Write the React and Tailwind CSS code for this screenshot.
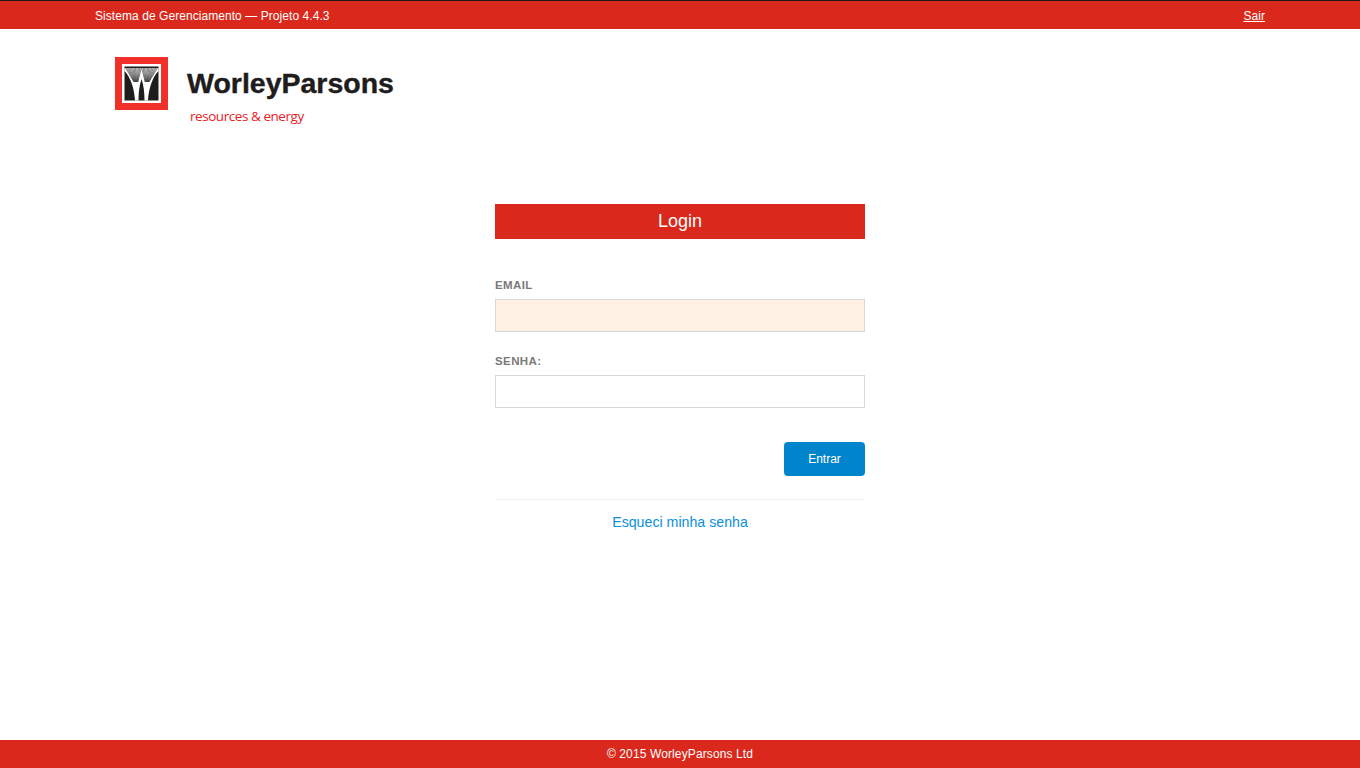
import React from 'react';

const sans = "font-['Liberation_Sans',Arial,sans-serif]";

// fan rays for the logo mark
const rays = [];
for (let i = 0; i <= 11; i++) {
  rays.push(i);
}

const LogoMark = () => (
  <svg width="53" height="53" viewBox="0 0 53 53" className="block shrink-0">
    <rect width="53" height="53" fill="#f1302a" />
    <rect x="7" y="7" width="39" height="39" fill="#ffffff" />
    <rect x="9.5" y="9.5" width="34" height="34" fill="#1f1c1c" />
    {/* two stems spreading into the fan */}
    <path d="M9.5 11 L43.5 11 L43.5 14 C37.5 20 33.5 32 33 43.5 L29.5 43.5 C29.5 35 28.5 28 26.5 22 C24.5 28 23.5 35 23.5 43.5 L20 43.5 C19.5 32 15.5 20 9.5 14 Z" fill="#ffffff" />
    {rays.map((i) => (
      <g key={i} stroke="#1f1c1c" strokeWidth="0.8" opacity="0.7">
        <line x1={10 + i * 1.5} y1="10" x2={19 + i * 0.35} y2="25" />
        <line x1={43 - i * 1.5} y1="10" x2={34 - i * 0.35} y2="25" />
      </g>
    ))}
  </svg>
);

const App = () => {
  return (
    <div className={`flex min-h-screen flex-col bg-white ${sans}`}>
      {/* top bar */}
      <div className="h-[29px] border-t border-t-[#1a1a1a] bg-[#da291c]">
        <div className="mx-auto flex h-[28px] w-[1170px] items-center justify-between pt-[1px] text-[12px] tracking-[0.06px] text-white">
          <span>Sistema de Gerenciamento — Projeto 4.4.3</span>
          <a href="#" className="underline">Sair</a>
        </div>
      </div>

      {/* logo */}
      <div className="mx-auto w-[1170px] pl-5 pt-7">
        <div className="flex h-[53px] items-center">
          <LogoMark />
          <span className="ml-[19px] text-[28.5px] font-bold leading-none text-[#1f1c1c] [-webkit-text-stroke:0.4px_#1f1c1c]">
            WorleyParsons
          </span>
        </div>
        <div className="ml-[75px] mt-[-4px] text-[13.5px] leading-[20px] tracking-[-0.45px] text-[#e8201f] font-['Open_Sans',sans-serif]">
          resources &amp; energy
        </div>
      </div>

      {/* login form */}
      <main className="mx-auto mt-[78px] w-[370px]">
        <h1 className="flex h-[35px] items-center justify-center bg-[#da291c] text-[18px] font-normal text-white">Login</h1>

        <label className="mt-[39px] block text-[11.5px] font-bold leading-[14px] tracking-[0.4px] text-[#7a7a7a]">EMAIL</label>
        <input type="text" className="mt-[7px] block h-[33px] w-full border border-[#d8d8d8] bg-[#fff0e3] outline-none" />

        <label className="mt-[22px] block text-[11.5px] font-bold leading-[14px] tracking-[0.4px] text-[#7a7a7a]">SENHA:</label>
        <input type="password" className="mt-[7px] block h-[33px] w-full border border-[#d8d8d8] bg-white outline-none" />

        <div className="mt-[34px] flex justify-end">
          <button className="h-[34px] w-[81px] rounded-[4px] bg-[#0085cc] text-[12px] text-white">Entrar</button>
        </div>

        <div className="mt-[23px] border-t border-[#eeeeee] pt-[13px] text-center">
          <a href="#" className="block text-[14.2px] leading-[18px] text-[#0a90dc]">Esqueci minha senha</a>
        </div>
      </main>

      {/* footer */}
      <footer className="mt-auto flex h-[28px] items-center justify-center bg-[#da291c] text-[12px] tracking-[0.12px] text-white">
        © 2015 WorleyParsons Ltd
      </footer>
    </div>
  );
};

export default App;
